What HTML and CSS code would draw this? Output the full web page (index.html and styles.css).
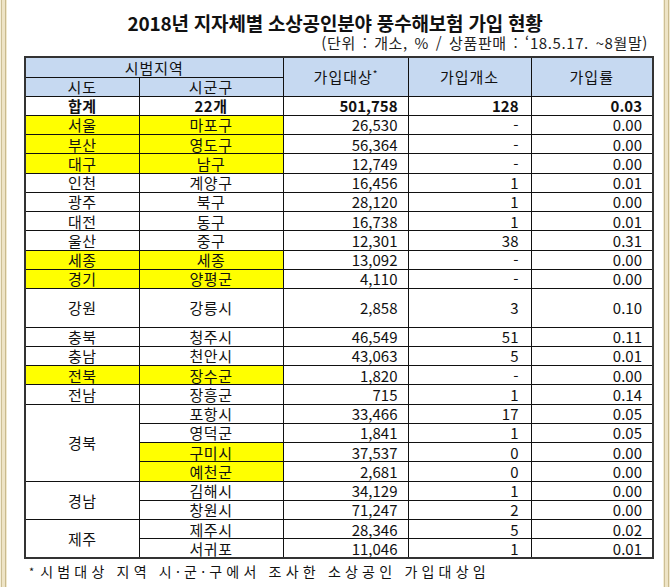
FILE: index.html
```html
<!DOCTYPE html>
<html lang="ko">
<head>
<meta charset="utf-8">
<link rel="stylesheet" href="styles.css">
</head>
<body>
<div class="frame">
  <div class="edge"></div>
  <div class="main">
    <div class="title">2018년 지자체별 소상공인분야 풍수해보험 가입 현황</div>
    <div class="sub">(단위 : 개소, % / 상품판매 : ‘18.5.17. ~8월말)</div>
    <table class="grid">
      <colgroup>
        <col class="c1"><col class="c2"><col class="c3"><col class="c4"><col class="c5">
      </colgroup>
      <thead>
        <tr class="h1">
          <th colspan="2">시범지역</th>
          <th rowspan="2">가입대상<sup>*</sup></th>
          <th rowspan="2">가입개소</th>
          <th rowspan="2">가입률</th>
        </tr>
        <tr class="h2">
          <th>시도</th>
          <th>시군구</th>
        </tr>
      </thead>
      <tbody>
        <tr class="total"><td class="k">합계</td><td class="k">22개</td><td class="n">501,758</td><td class="m">128</td><td class="r">0.03</td></tr>
        <tr><td class="k y">서울</td><td class="k y">마포구</td><td class="n">26,530</td><td class="m">-</td><td class="r">0.00</td></tr>
        <tr><td class="k y">부산</td><td class="k y">영도구</td><td class="n">56,364</td><td class="m">-</td><td class="r">0.00</td></tr>
        <tr><td class="k y">대구</td><td class="k y">남구</td><td class="n">12,749</td><td class="m">-</td><td class="r">0.00</td></tr>
        <tr><td class="k">인천</td><td class="k">계양구</td><td class="n">16,456</td><td class="m">1</td><td class="r">0.01</td></tr>
        <tr><td class="k">광주</td><td class="k">북구</td><td class="n">28,120</td><td class="m">1</td><td class="r">0.00</td></tr>
        <tr><td class="k">대전</td><td class="k">동구</td><td class="n">16,738</td><td class="m">1</td><td class="r">0.01</td></tr>
        <tr><td class="k">울산</td><td class="k">중구</td><td class="n">12,301</td><td class="m">38</td><td class="r">0.31</td></tr>
        <tr><td class="k y">세종</td><td class="k y">세종</td><td class="n">13,092</td><td class="m">-</td><td class="r">0.00</td></tr>
        <tr><td class="k y">경기</td><td class="k y">양평군</td><td class="n">4,110</td><td class="m">-</td><td class="r">0.00</td></tr>
        <tr class="tall"><td class="k">강원</td><td class="k">강릉시</td><td class="n">2,858</td><td class="m">3</td><td class="r">0.10</td></tr>
        <tr><td class="k">충북</td><td class="k">청주시</td><td class="n">46,549</td><td class="m">51</td><td class="r">0.11</td></tr>
        <tr><td class="k">충남</td><td class="k">천안시</td><td class="n">43,063</td><td class="m">5</td><td class="r">0.01</td></tr>
        <tr><td class="k y">전북</td><td class="k y">장수군</td><td class="n">1,820</td><td class="m">-</td><td class="r">0.00</td></tr>
        <tr><td class="k">전남</td><td class="k">장흥군</td><td class="n">715</td><td class="m">1</td><td class="r">0.14</td></tr>
        <tr><td class="k" rowspan="4">경북</td><td class="k">포항시</td><td class="n">33,466</td><td class="m">17</td><td class="r">0.05</td></tr>
        <tr><td class="k">영덕군</td><td class="n">1,841</td><td class="m">1</td><td class="r">0.05</td></tr>
        <tr><td class="k y">구미시</td><td class="n">37,537</td><td class="m">0</td><td class="r">0.00</td></tr>
        <tr><td class="k y">예천군</td><td class="n">2,681</td><td class="m">0</td><td class="r">0.00</td></tr>
        <tr><td class="k" rowspan="2">경남</td><td class="k">김해시</td><td class="n">34,129</td><td class="m">1</td><td class="r">0.00</td></tr>
        <tr><td class="k">창원시</td><td class="n">71,247</td><td class="m">2</td><td class="r">0.00</td></tr>
        <tr><td class="k" rowspan="2">제주</td><td class="k">제주시</td><td class="n">28,346</td><td class="m">5</td><td class="r">0.02</td></tr>
        <tr><td class="k">서귀포</td><td class="n">11,046</td><td class="m">1</td><td class="r">0.01</td></tr>
      </tbody>
    </table>
    <div class="note"><span class="star">*</span>시범대상 지역 시·군·구에서 조사한 소상공인 가입대상임</div>
  </div>
  <div class="edge"></div>
</div>
</body>
</html>
```

FILE: styles.css
```css
html, body {
  margin: 0;
  padding: 0;
  background: #ffffff;
}

body {
  font-family: "Noto Sans CJK KR", "Noto Sans", sans-serif;
  color: #111;
}

.frame {
  display: flex;
  width: 670px;
  height: 587px;
  overflow: hidden;
}

.edge {
  width: 7px;
  flex: 0 0 7px;
  background: linear-gradient(to right,
    #f4eed8 0 1px,
    #cdbf95 1px 2px,
    #eee4c6 2px 5px,
    #c9ba8e 5px 6px,
    #f1e9cf 6px 7px);
}

.main {
  flex: 1;
  display: flex;
  flex-direction: column;
}

.title {
  margin-top: 13px;
  height: 20px;
  line-height: 20px;
  text-align: center;
  font-size: 19px;
  font-weight: 700;
  letter-spacing: -0.2px;
  color: #111;
}

.sub {
  margin-top: 2px;
  height: 16px;
  line-height: 16px;
  text-align: right;
  padding-right: 15px;
  font-size: 15px;
  letter-spacing: 0.6px;
  word-spacing: 2px;
  color: #222;
}

.grid {
  margin-top: 5px;
  margin-left: 17px;
  width: 628px;
  border-collapse: collapse;
  table-layout: fixed;
  border: 2px solid #333;
}

.c1 { width: 114px; }
.c2 { width: 144px; }
.c3 { width: 125px; }
.c4 { width: 123px; }
.c5 { width: 122px; }

.grid th,
.grid td {
  border: 1px solid #111;
  padding: 0;
  font-size: 15px;
  line-height: 17px;
  white-space: nowrap;
  overflow: hidden;
}

.grid th {
  background: #c6d9f1;
  font-weight: 400;
  letter-spacing: 1px;
  color: #111;
}

.grid thead tr.h1 { height: 20px; }
.grid thead tr.h2 { height: 19px; }

.grid th sup {
  font-size: 10px;
  vertical-align: 5px;
  line-height: 0;
  letter-spacing: 0;
}

.grid tbody tr { height: 19.25px; }
.grid tbody tr.tall { height: 38.5px; }

.k {
  text-align: center;
  letter-spacing: 0.5px;
}

.n {
  text-align: right;
  padding-right: 10px !important;
}

.m {
  text-align: right;
  padding-right: 12px !important;
}

.r {
  text-align: right;
  padding-right: 10px !important;
}

.y {
  background: #ffff00;
}

.total td {
  font-weight: 700;
}

.note {
  margin-top: 2px;
  margin-left: 22px;
  font-size: 14px;
  line-height: 20px;
  letter-spacing: 4.2px;
  color: #111;
}

.star {
  display: inline-block;
  font-size: 11px;
  margin-right: 6px;
  letter-spacing: 0;
  vertical-align: 1px;
}
```
